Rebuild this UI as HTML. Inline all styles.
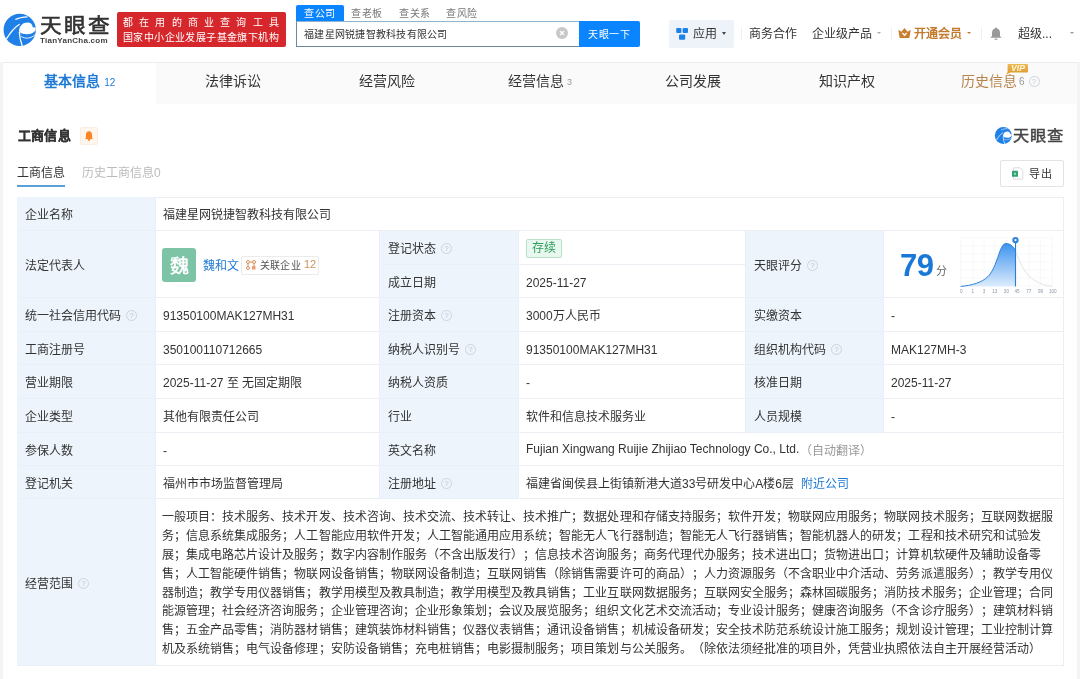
<!DOCTYPE html>
<html lang="zh-CN"><head><meta charset="utf-8">
<style>
*{margin:0;padding:0;box-sizing:border-box}
html,body{width:1080px;height:679px;overflow:hidden}
body{background:#f4f4f4;font-family:"Liberation Sans",sans-serif;color:#333;position:relative;text-spacing-trim:space-all}
.a{position:absolute;white-space:nowrap}
.tab{position:absolute;top:0;height:41px;line-height:38px;font-size:14px;color:#333;text-align:center}
.c{position:absolute;border-bottom:1px solid #ebeef2;border-right:1px solid #ebeef2;font-size:12px;color:#333;white-space:nowrap;display:flex;align-items:center;padding-left:7px;padding-top:0}
.l{background:#edf4fc;padding-left:8px;border-bottom-color:#e9f0f9;border-right-color:#e9f0f9}
.q{display:inline-block;width:11px;height:11px;border:1px solid #cdd4db;border-radius:50%;margin-left:5px;position:relative;top:1px}
.q:after{content:"?";position:absolute;left:0;right:0;top:0;font-size:8px;color:#c0c7ce;text-align:center;line-height:9px}
.tag{display:inline-block;height:19px;line-height:17px;padding:0 5px;border:1px solid #b9e3c9;background:#e9f8ef;color:#2c9c5e;font-size:12px;border-radius:2px;position:relative;top:1px}
.scope{white-space:normal;line-height:18.8px;width:894px;letter-spacing:0.04px;padding-top:3px;margin-left:-1px}
.sep{position:absolute;width:1px;background:#f0f0f0}
.n{position:relative;top:1.5px}
</style></head><body><div style="position:absolute;left:0;top:0;width:1080px;height:679px;will-change:transform">

<div class="a" style="left:0;top:0;width:1080px;height:62px;background:#fff"></div>
<svg class="a" style="left:2px;top:12px" width="36" height="36" viewBox="0 0 36 36">
<defs><clipPath id="cp1"><circle cx="17.7" cy="17.9" r="16.1"/></clipPath></defs>
<circle cx="17.7" cy="17.9" r="16.1" fill="#1f80e8"/>
<g clip-path="url(#cp1)">
<path d="M17 19.5 C17 14 21 10.6 25.5 10.6 C28.2 10.6 30.2 12 30.8 15.3 L36 15.7 L36 17.8 L33.9 17.8 C32 21 29 22.2 25 22.2 C21 22.2 18 21 17 19.5 Z" fill="#fff"/>
<path d="M4.3 27.2 C8 21 12 15.5 17.6 12.2" stroke="#fff" stroke-width="1.3" fill="none"/>
<path d="M13.3 7.6 C16 6.2 20 5.2 25.5 4.9" stroke="#fff" stroke-width="1.1" fill="none"/>
<path d="M17.3 20 C17.6 25 18.6 29.5 20.4 34.5" stroke="#fff" stroke-width="1.3" fill="none"/>
<path d="M19.2 24.4 C23 27 29 27 33.8 22" stroke="#fff" stroke-width="1" fill="none" opacity="0.85"/>
</g></svg>
<div class="a" style="left:39.5px;top:10px;font-size:20px;font-weight:normal;-webkit-text-stroke:0.6px #333;color:#333;letter-spacing:2px;transform:scaleX(1.08);transform-origin:0 0">天眼查</div>
<div class="a" style="left:40px;top:36px;font-size:8px;font-weight:bold;color:#444;letter-spacing:0.25px">TianYanCha.com</div>
<div class="a" style="left:117px;top:12px;width:169px;height:35px;background:#d6282c;border-radius:2px"></div>
<div class="a" style="left:123px;top:14.3px;font-size:10px;color:#fff;letter-spacing:6.2px">都在用的商业查询工具</div>
<div class="a" style="left:123px;top:28.7px;font-size:10px;letter-spacing:0.4px;color:#fff">国家中小企业发展子基金旗下机构</div>
<div class="a" style="left:296px;top:5px;width:48px;height:17px;background:#0a84ff;border-radius:2px 2px 0 0"></div>
<div class="a" style="left:304px;top:4.5px;font-size:10px;letter-spacing:0.5px;color:#fff">查公司</div>
<div class="a" style="left:351px;top:4.5px;font-size:10px;letter-spacing:0.5px;color:#777">查老板</div>
<div class="a" style="left:399px;top:4.5px;font-size:10px;letter-spacing:0.5px;color:#777">查关系</div>
<div class="a" style="left:446px;top:4.5px;font-size:10px;letter-spacing:0.5px;color:#777">查风险</div>
<div class="a" style="left:296px;top:21px;width:284px;height:26px;border:1px solid #6d8a9c;border-top-color:#8fb3d0;background:#fff"></div>
<div class="a" style="left:304px;top:26.3px;font-size:10px;letter-spacing:0.25px;color:#333">福建星网锐捷智教科技有限公司</div>
<div class="a" style="left:556px;top:27px;width:12px;height:12px;border-radius:50%;background:#c8c8c8"></div>
<svg class="a" style="left:556px;top:27px" width="12" height="12"><path d="M4 4 L8 8 M8 4 L4 8" stroke="#fff" stroke-width="1.3"/></svg>
<div class="a" style="left:579px;top:21px;width:61px;height:26px;background:#0a84ff;border-radius:0 2px 2px 0"></div>
<div class="a" style="left:588px;top:25.5px;font-size:10px;letter-spacing:0.5px;color:#fff">天眼一下</div>
<div class="a" style="left:669px;top:20px;width:65px;height:28px;background:#eef3fa;border-radius:2px"></div>
<svg class="a" style="left:675px;top:27px" width="16" height="14"><rect x="1.2" y="1" width="5.2" height="5" rx="1" fill="#1f80e8"/><rect x="7.6" y="1" width="5.4" height="5" rx="1" fill="#1f80e8"/><rect x="4" y="7.4" width="6.2" height="5.4" rx="1.2" fill="#1f80e8"/></svg>
<div class="a" style="left:693px;top:23.7px;font-size:12px;letter-spacing:0.2px;color:#333">应用</div>
<div class="a" style="left:721.5px;top:31.5px;width:0;height:0;border-left:2.6px solid transparent;border-right:2.6px solid transparent;border-top:3px solid #444"></div>
<div class="sep" style="left:741px;top:27px;height:13px"></div>
<div class="a" style="left:749px;top:24px;font-size:12px;color:#333">商务合作</div>
<div class="a" style="left:812px;top:24px;font-size:12px;color:#333">企业级产品</div>
<div class="a" style="left:876.5px;top:31.5px;width:0;height:0;border-left:2.4px solid transparent;border-right:2.4px solid transparent;border-top:2.6px solid #aaa"></div>
<div class="sep" style="left:891px;top:27px;height:13px"></div>
<svg class="a" style="left:898px;top:28px" width="13" height="10" viewBox="0 0 13 10"><path d="M0.3 1.8 L3.4 3.8 L6.5 0 L9.6 3.8 L12.7 1.8 L11.4 10 L1.6 10 Z" fill="#c8802e"/><path d="M4.4 5 L6.5 7.2 L8.6 5" stroke="#fff" stroke-width="1.3" fill="none"/></svg>
<div class="a" style="left:914px;top:24px;font-size:12px;color:#c47a2c;font-weight:bold">开通会员</div>
<div class="a" style="left:967px;top:31.7px;width:0;height:0;border-left:2.4px solid transparent;border-right:2.4px solid transparent;border-top:2.7px solid #c47a2c"></div>
<div class="sep" style="left:981px;top:27px;height:13px"></div>
<svg class="a" style="left:990px;top:27px" width="12" height="13" viewBox="0 0 12 13"><path d="M6 0.5 C6.6 0.5 7 0.9 7 1.4 C9 1.9 10 3.6 10 6 L10 9 L11.6 10.8 L0.4 10.8 L2 9 L2 6 C2 3.6 3 1.9 5 1.4 C5 0.9 5.4 0.5 6 0.5 Z" fill="#9a9a9a"/><rect x="4.5" y="11.6" width="3" height="1.2" rx="0.6" fill="#9a9a9a"/></svg>
<div class="a" style="left:1018px;top:24px;font-size:12px;color:#333">超级...</div>
<div class="a" style="left:1069.5px;top:31.6px;width:0;height:0;border-left:2.6px solid transparent;border-right:2.6px solid transparent;border-top:2.8px solid #999"></div>
<div class="a" style="left:3px;top:62px;width:1074px;height:42px;background:#fafafa;border-top:1px solid #ececec"></div>
<div class="a" style="left:3px;top:63px;width:153px;height:41px;background:#fff"></div>
<div class="tab" style="left:3.0px;top:62px;width:153.4px"><span style="font-weight:bold;color:#1f7ad6">基本信息</span><span style="font-size:10px;color:#1f7ad6;margin-left:4px">12</span></div>
<div class="tab" style="left:156.4px;top:62px;width:153.4px">法律诉讼</div>
<div class="tab" style="left:309.9px;top:62px;width:153.4px">经营风险</div>
<div class="tab" style="left:463.3px;top:62px;width:153.4px"><span style="color:#333">经营信息</span><span style="font-size:9px;color:#999;margin-left:3px;position:relative;top:-1px">3</span></div>
<div class="tab" style="left:616.7px;top:62px;width:153.4px">公司发展</div>
<div class="tab" style="left:770.1px;top:62px;width:153.4px">知识产权</div>
<div class="tab" style="left:923.6px;top:62px;width:153.4px"><span style="color:#b8844e">历史信息</span><span style="font-size:10px;color:#999;margin-left:2px;position:relative;top:-1px">6</span><span class="q" style="margin-left:4px;top:1px;width:11px;height:11px"></span></div>
<svg class="a" style="left:1005px;top:63px" width="24" height="13" viewBox="0 0 24 13"><defs><linearGradient id="vg" x1="0" y1="0" x2="0" y2="1"><stop offset="0" stop-color="#f0b850"/><stop offset="1" stop-color="#d9982e"/></linearGradient></defs><path d="M3.6 1 L22 1 Q23 1 23 2 L23 8.6 Q23 9.6 22 9.6 L5.2 9.6 L1.2 11.8 L2.6 9 L2.6 2 Q2.6 1 3.6 1Z" fill="url(#vg)"/><text x="13" y="8.3" font-size="8.6" font-weight="bold" font-style="italic" fill="#fff6dc" text-anchor="middle" font-family="Liberation Sans">VIP</text></svg>
<div class="a" style="left:3px;top:104px;width:1074px;height:575px;background:#fff"></div>
<div class="a" style="left:17.5px;top:125px;font-size:13px;letter-spacing:0.4px;font-weight:bold;-webkit-text-stroke:0.25px #333;color:#333">工商信息</div>
<div class="a" style="left:80px;top:126.5px;width:18px;height:18px;background:#fef5ec;border:1px solid #fbeee0;border-radius:2px"></div>
<svg class="a" style="left:84.5px;top:130.5px" width="8" height="10" viewBox="0 0 8 10"><path d="M4 0.2 C6.2 0.2 7.1 2 7.1 4.2 L7.1 6.6 L7.8 8 L0.2 8 L0.9 6.6 L0.9 4.2 C0.9 2 1.8 0.2 4 0.2Z" fill="#fb8522"/><ellipse cx="4" cy="8.8" rx="1.4" ry="1" fill="#fb8522"/></svg>
<div class="a" style="left:17px;top:163px;font-size:12px;color:#333">工商信息</div>
<div class="a" style="left:82px;top:163px;font-size:12px;color:#bbb">历史工商信息0</div>
<div class="a" style="left:17px;top:185px;width:48px;height:2px;background:#5b9fd4"></div>
<svg class="a" style="left:993.5px;top:126.3px" width="19" height="19" viewBox="0 0 36 36">
<defs><clipPath id="cp2"><circle cx="17.7" cy="17.9" r="16.1"/></clipPath></defs>
<circle cx="17.7" cy="17.9" r="16.1" fill="#1f80e8"/>
<g clip-path="url(#cp2)">
<path d="M17 19.5 C17 14 21 10.6 25.5 10.6 C28.2 10.6 30.2 12 30.8 15.3 L36 15.7 L36 17.8 L33.9 17.8 C32 21 29 22.2 25 22.2 C21 22.2 18 21 17 19.5 Z" fill="#fff"/>
<path d="M4.3 27.2 C8 21 12 15.5 17.6 12.2" stroke="#fff" stroke-width="1.3" fill="none"/>
<path d="M13.3 7.6 C16 6.2 20 5.2 25.5 4.9" stroke="#fff" stroke-width="1.1" fill="none"/>
<path d="M17.3 20 C17.6 25 18.6 29.5 20.4 34.5" stroke="#fff" stroke-width="1.3" fill="none"/>
<path d="M19.2 24.4 C23 27 29 27 33.8 22" stroke="#fff" stroke-width="1" fill="none" opacity="0.85"/>
</g></svg>
<div class="a" style="left:1012.5px;top:124px;font-size:15px;font-weight:normal;-webkit-text-stroke:0.45px #444;color:#444;letter-spacing:0.8px;transform:scaleX(1.08);transform-origin:0 0">天眼查</div>
<div class="a" style="left:1000px;top:160px;width:64px;height:27px;border:1px solid #e3e3e3;border-radius:2px"></div>
<svg class="a" style="left:1011px;top:167px" width="13" height="13" viewBox="0 0 13 13"><path d="M2.5 0.8 L9 0.8 L11.8 3.6 L11.8 12.2 L2.5 12.2 Z" fill="#fff" stroke="#d8d8d8" stroke-width="0.9"/><rect x="1" y="3.8" width="6" height="6" rx="0.6" fill="#35a273"/><rect x="3" y="5.8" width="2" height="2" fill="#8fe0bd"/></svg>
<div class="a" style="left:1029px;top:164.5px;font-size:11px;letter-spacing:0.5px;color:#333">导出</div>
<div class="a" style="left:17px;top:197px;width:1047px;height:469px;border-top:1px solid #e9edf2;border-left:1px solid #e9edf2"></div>
<div class="c l" style="left:17px;top:197px;width:139px;height:34px;">企业名称</div>
<div class="c" style="left:156px;top:197px;width:908px;height:34px;">福建星网锐捷智教科技有限公司</div>
<div class="c l" style="left:17px;top:231px;width:139px;height:67px;">法定代表人</div>
<div class="c" style="left:156px;top:231px;width:224px;height:67px;padding-left:0"><div style="position:relative;width:100%;height:100%"><div class="a" style="left:6px;top:17px;width:34px;height:34px;background:#7cc4a5;border-radius:3px;color:#fff;font-size:19px;font-weight:normal;-webkit-text-stroke:0.5px #fff;text-align:center;line-height:37px">魏</div><div class="a" style="left:47px;top:24.5px;font-size:12px;color:#1f7ad6">魏和文</div><div class="a" style="left:85px;top:25px;width:78px;height:19px;border:1px solid #ebebeb;border-radius:2px"></div><svg class="a" style="left:90px;top:29px" width="10" height="10" viewBox="0 0 10 10"><circle cx="2" cy="2" r="1.5" fill="none" stroke="#d6905a" stroke-width="1"/><circle cx="8" cy="2" r="1.5" fill="none" stroke="#d6905a" stroke-width="1"/><circle cx="2" cy="8" r="1.5" fill="none" stroke="#d6905a" stroke-width="1"/><rect x="6" y="6" width="3.5" height="3.5" fill="#e9a070"/><path d="M2 3.5 L2 6.5 M3.5 2 L6.5 2 M8 3.5 L8 6" stroke="#d6905a" stroke-width="1"/></svg><div class="a" style="left:104px;top:26px;font-size:10px;letter-spacing:0.2px;color:#555">关联企业</div><div class="a" style="left:148px;top:26.5px;font-size:11px;color:#c8955a">12</div></div></div>
<div class="c l" style="left:380px;top:231px;width:139px;height:34px;">登记状态<span class="q"></span></div>
<div class="c" style="left:519px;top:231px;width:227px;height:34px;"><span class="tag">存续</span></div>
<div class="c l" style="left:380px;top:265px;width:139px;height:33px;">成立日期</div>
<div class="c" style="left:519px;top:265px;width:227px;height:33px;"><span class="n">2025-11-27</span></div>
<div class="c l" style="left:746px;top:231px;width:138px;height:67px;">天眼评分<span class="q"></span></div>
<div class="c" style="left:884px;top:231px;width:180px;height:67px;padding-left:0"><div style="position:relative;width:100%;height:100%"><div class="a" style="left:16px;top:16.5px;font-size:31px;font-weight:bold;color:#1a78d8;letter-spacing:-0.5px">79</div><div class="a" style="left:52px;top:30.5px;font-size:11px;color:#666">分</div><svg class="a" style="left:74px;top:3px" width="104" height="64" viewBox="0 0 104 64"><defs><linearGradient id="gf" x1="0" y1="0" x2="0" y2="1"><stop offset="0" stop-color="#3d93ee"/><stop offset="1" stop-color="#dcecfc"/></linearGradient></defs><line x1="2.6" y1="4" x2="94.2" y2="4" stroke="#f5f6f8" stroke-width="0.7"/><line x1="2.6" y1="12" x2="94.2" y2="12" stroke="#f5f6f8" stroke-width="0.7"/><line x1="2.6" y1="20" x2="94.2" y2="20" stroke="#f5f6f8" stroke-width="0.7"/><line x1="2.6" y1="28" x2="94.2" y2="28" stroke="#f5f6f8" stroke-width="0.7"/><line x1="2.6" y1="36" x2="94.2" y2="36" stroke="#f5f6f8" stroke-width="0.7"/><line x1="2.6" y1="44" x2="94.2" y2="44" stroke="#f5f6f8" stroke-width="0.7"/><line x1="2.6" y1="52" x2="94.2" y2="52" stroke="#f5f6f8" stroke-width="0.7"/><line x1="2.6" y1="4" x2="2.6" y2="52.4" stroke="#f5f6f8" stroke-width="0.7"/><line x1="14.9" y1="4" x2="14.9" y2="52.4" stroke="#f5f6f8" stroke-width="0.7"/><line x1="26.1" y1="4" x2="26.1" y2="52.4" stroke="#f5f6f8" stroke-width="0.7"/><line x1="36.7" y1="4" x2="36.7" y2="52.4" stroke="#f5f6f8" stroke-width="0.7"/><line x1="48.4" y1="4" x2="48.4" y2="52.4" stroke="#f5f6f8" stroke-width="0.7"/><line x1="59.1" y1="4" x2="59.1" y2="52.4" stroke="#f5f6f8" stroke-width="0.7"/><line x1="70.8" y1="4" x2="70.8" y2="52.4" stroke="#f5f6f8" stroke-width="0.7"/><line x1="82.5" y1="4" x2="82.5" y2="52.4" stroke="#f5f6f8" stroke-width="0.7"/><line x1="94.2" y1="4" x2="94.2" y2="52.4" stroke="#f5f6f8" stroke-width="0.7"/><path d="M2.6 52.4 C14 51.5 24 48.5 30 42.5 C36 36.5 39 25 42 17 C44 12 45.5 9.6 48 9.6 C52 9.6 55.5 12 57.5 17.3 L57.5 52.4 Z" fill="url(#gf)"/><path d="M2.6 52.4 C14 51.5 24 48.5 30 42.5 C36 36.5 39 25 42 17 C44 12 45.5 9.6 48 9.6 C52 9.6 55.5 12 57.5 17.3" fill="none" stroke="#2f84dc" stroke-width="1"/><path d="M57.5 17.3 C60 23 63 32 68 38.5 C73 45 80 50.5 94.2 52.4" fill="none" stroke="#e2e5e9" stroke-width="1"/><line x1="57.5" y1="7" x2="57.5" y2="52.4" stroke="#2c7cd0" stroke-width="1.1"/><circle cx="57.5" cy="6.1" r="3.2" fill="#2f84dc"/><circle cx="57.5" cy="6.1" r="1.1" fill="#fff"/><text x="3.2" y="58.6" font-size="4.6" fill="#8796a6" text-anchor="middle" font-family="Liberation Sans">0</text><text x="14.9" y="58.6" font-size="4.6" fill="#8796a6" text-anchor="middle" font-family="Liberation Sans">1</text><text x="26.1" y="58.6" font-size="4.6" fill="#8796a6" text-anchor="middle" font-family="Liberation Sans">3</text><text x="36.7" y="58.6" font-size="4.6" fill="#8796a6" text-anchor="middle" font-family="Liberation Sans">13</text><text x="48.4" y="58.6" font-size="4.6" fill="#8796a6" text-anchor="middle" font-family="Liberation Sans">30</text><text x="59.1" y="58.6" font-size="4.6" fill="#8796a6" text-anchor="middle" font-family="Liberation Sans">45</text><text x="70.8" y="58.6" font-size="4.6" fill="#8796a6" text-anchor="middle" font-family="Liberation Sans">77</text><text x="82.5" y="58.6" font-size="4.6" fill="#8796a6" text-anchor="middle" font-family="Liberation Sans">99</text><text x="94.8" y="58.6" font-size="4.6" fill="#8796a6" text-anchor="middle" font-family="Liberation Sans">100</text></svg></div></div>
<div class="c l" style="left:17px;top:298px;width:139px;height:34px;">统一社会信用代码<span class="q"></span></div>
<div class="c" style="left:156px;top:298px;width:224px;height:34px;"><span class="n">91350100MAK127MH31</span></div>
<div class="c l" style="left:380px;top:298px;width:139px;height:34px;">注册资本<span class="q"></span></div>
<div class="c" style="left:519px;top:298px;width:227px;height:34px;"><span class="n">3000</span>万人民币</div>
<div class="c l" style="left:746px;top:298px;width:138px;height:34px;">实缴资本</div>
<div class="c" style="left:884px;top:298px;width:180px;height:34px;"><span class="n">-</span></div>
<div class="c l" style="left:17px;top:332px;width:139px;height:33px;">工商注册号</div>
<div class="c" style="left:156px;top:332px;width:224px;height:33px;"><span class="n">350100110712665</span></div>
<div class="c l" style="left:380px;top:332px;width:139px;height:33px;">纳税人识别号<span class="q"></span></div>
<div class="c" style="left:519px;top:332px;width:227px;height:33px;"><span class="n">91350100MAK127MH31</span></div>
<div class="c l" style="left:746px;top:332px;width:138px;height:33px;">组织机构代码<span class="q"></span></div>
<div class="c" style="left:884px;top:332px;width:180px;height:33px;"><span class="n">MAK127MH-3</span></div>
<div class="c l" style="left:17px;top:365px;width:139px;height:34px;">营业期限</div>
<div class="c" style="left:156px;top:365px;width:224px;height:34px;"><span class="n">2025-11-27</span>&nbsp;至 无固定期限</div>
<div class="c l" style="left:380px;top:365px;width:139px;height:34px;">纳税人资质</div>
<div class="c" style="left:519px;top:365px;width:227px;height:34px;"><span class="n">-</span></div>
<div class="c l" style="left:746px;top:365px;width:138px;height:34px;">核准日期</div>
<div class="c" style="left:884px;top:365px;width:180px;height:34px;"><span class="n">2025-11-27</span></div>
<div class="c l" style="left:17px;top:399px;width:139px;height:34px;">企业类型</div>
<div class="c" style="left:156px;top:399px;width:224px;height:34px;">其他有限责任公司</div>
<div class="c l" style="left:380px;top:399px;width:139px;height:34px;">行业</div>
<div class="c" style="left:519px;top:399px;width:227px;height:34px;">软件和信息技术服务业</div>
<div class="c l" style="left:746px;top:399px;width:138px;height:34px;">人员规模</div>
<div class="c" style="left:884px;top:399px;width:180px;height:34px;"><span class="n">-</span></div>
<div class="c l" style="left:17px;top:433px;width:139px;height:33px;">参保人数</div>
<div class="c" style="left:156px;top:433px;width:224px;height:33px;"><span class="n">-</span></div>
<div class="c l" style="left:380px;top:433px;width:139px;height:33px;">英文名称</div>
<div class="c" style="left:519px;top:433px;width:545px;height:33px;">Fujian Xingwang Ruijie Zhijiao Technology Co., Ltd.<span style="color:#999;margin-left:1px">（自动翻译）</span></div>
<div class="c l" style="left:17px;top:466px;width:139px;height:33px;">登记机关</div>
<div class="c" style="left:156px;top:466px;width:224px;height:33px;">福州市市场监督管理局</div>
<div class="c l" style="left:380px;top:466px;width:139px;height:33px;">注册地址<span class="q"></span></div>
<div class="c" style="left:519px;top:466px;width:545px;height:33px;">福建省闽侯县上街镇新港大道33号研发中心A楼6层<span style="color:#1f7ad6;margin-left:7px">附近公司</span></div>
<div class="c l" style="left:17px;top:499px;width:139px;height:167px;">经营范围<span class="q"></span></div>
<div class="c" style="left:156px;top:499px;width:908px;height:167px;"><div class="scope">一般项目：技术服务、技术开发、技术咨询、技术交流、技术转让、技术推广；数据处理和存储支持服务；软件开发；物联网应用服务；物联网技术服务；互联网数据服务；信息系统集成服务；人工智能应用软件开发；人工智能通用应用系统；智能无人飞行器制造；智能无人飞行器销售；智能机器人的研发；工程和技术研究和试验发展；集成电路芯片设计及服务；数字内容制作服务（不含出版发行）；信息技术咨询服务；商务代理代办服务；技术进出口；货物进出口；计算机软硬件及辅助设备零售；人工智能硬件销售；物联网设备销售；物联网设备制造；互联网销售（除销售需要许可的商品）；人力资源服务（不含职业中介活动、劳务派遣服务）；教学专用仪器制造；教学专用仪器销售；教学用模型及教具制造；教学用模型及教具销售；工业互联网数据服务；互联网安全服务；森林固碳服务；消防技术服务；企业管理；合同能源管理；社会经济咨询服务；企业管理咨询；企业形象策划；会议及展览服务；组织文化艺术交流活动；专业设计服务；健康咨询服务（不含诊疗服务）；建筑材料销售；五金产品零售；消防器材销售；建筑装饰材料销售；仪器仪表销售；通讯设备销售；机械设备研发；安全技术防范系统设计施工服务；规划设计管理；工业控制计算机及系统销售；电气设备修理；安防设备销售；充电桩销售；电影摄制服务；项目策划与公关服务。（除依法须经批准的项目外，凭营业执照依法自主开展经营活动）</div></div>
</div></body></html>
